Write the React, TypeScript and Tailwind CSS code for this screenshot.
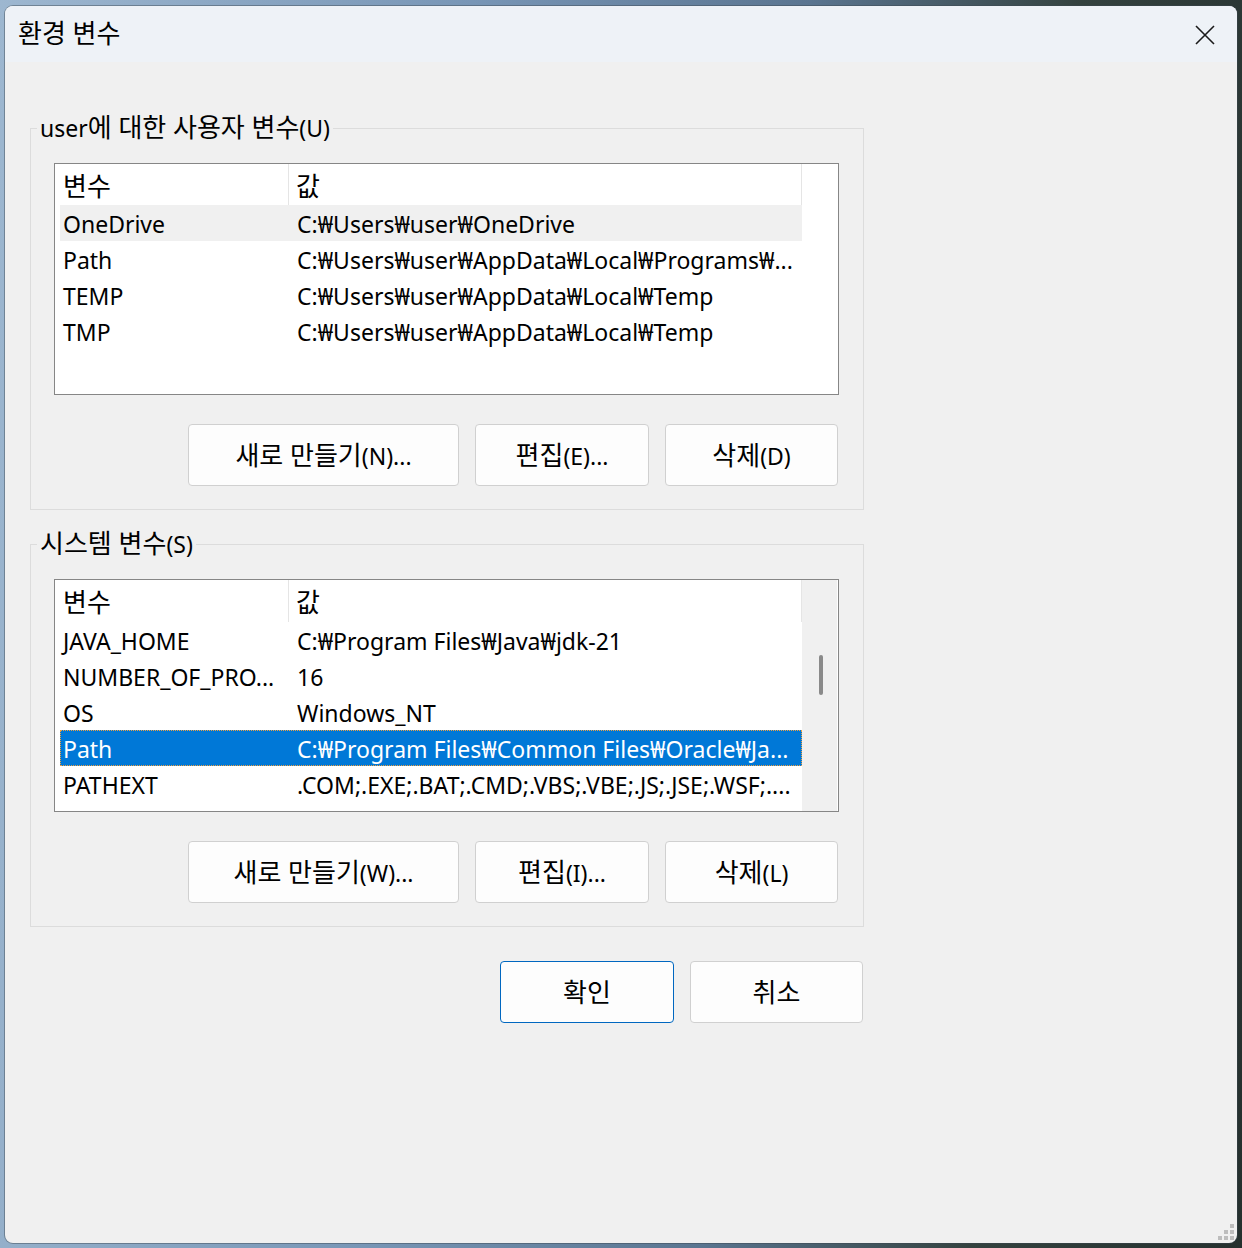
import React from "react";

const FONT = { fontFamily: '"Noto Sans", "Noto Sans CJK KR", sans-serif' };

function K({ t }: { t: string }) {
  const parts = t.split(/([\uAC00-\uD7A3]+(?: [\uAC00-\uD7A3]+)*)/);
  return (
    <>
      {parts.map((p, i) =>
        /[\uAC00-\uD7A3]/.test(p) ? (
          <span key={i} className="text-[26px] leading-none">
            {p}
          </span>
        ) : (
          <React.Fragment key={i}>{p}</React.Fragment>
        )
      )}
    </>
  );
}

function Btn({ label, w, primary }: { label: string; w: string; primary?: boolean }) {
  return (
    <div
      className={`${w} h-[62px] rounded-[4px] bg-[#fdfdfd] flex items-center justify-center text-[23px] leading-none text-black border ${
        primary ? "border-[#0067c0]" : "border-[#d0d0d0]"
      }`}
    >
      <span>
        <K t={label} />
      </span>
    </div>
  );
}

type Row = { name: string; value: string; selected?: boolean; hover?: boolean };

function ListView({
  rows,
  scroll,
  headerH,
  h,
}: {
  rows: Row[];
  scroll?: boolean;
  headerH: string;
  h: string;
}) {
  return (
    <div className={`w-[785px] ${h} border border-[#868686] bg-white flex overflow-hidden`}>
      <div className="w-[748px] flex flex-col">
        <div className={`${headerH} flex shrink-0`}>
          <div className="w-[234px] border-r border-[#e5e5e5] pl-[8px] pt-[2px] flex items-center">
            <K t="변수" />
          </div>
          <div className="w-[513px] border-r border-[#e5e5e5] pl-[7px] pt-[2px] flex items-center">
            <K t="값" />
          </div>
        </div>
        <div className="pl-[5px] flex flex-col">
          {rows.map((r) => (
            <div
              key={r.name}
              className={`h-[36px] w-[742px] flex items-center shrink-0 pt-[3px] text-[23px] whitespace-nowrap ${
                r.selected
                  ? "bg-[#0078d7] text-white outline-1 outline-dotted outline-[#f0a040] -outline-offset-1"
                  : r.hover
                  ? "bg-[#f0f0f0] text-black"
                  : "text-black"
              }`}
            >
              <div className="w-[229px] pl-[3px]">{r.name}</div>
              <div className="flex-1 pl-[8px]">{r.value}</div>
            </div>
          ))}
        </div>
      </div>
      {scroll ? (
        <div className="ml-[-1px] w-[35px] h-full bg-[#f0f0f0] flex justify-center">
          <div className="mt-[75px] ml-[2px] w-[4px] h-[40px] rounded-full bg-[#8a8a8a]" />
        </div>
      ) : null}
    </div>
  );
}

function Group({
  label,
  rows,
  scroll,
  buttons,
  headerH,
  listH,
  className,
}: {
  label: string;
  rows: Row[];
  scroll?: boolean;
  buttons: string[];
  headerH: string;
  listH: string;
  className: string;
}) {
  return (
    <div className={`relative w-[834px] border border-[#dcdcdc] pl-[23px] pr-[24px] pt-[34px] pb-[23px] ${className}`}>
      <span className="absolute left-[6px] top-[-16px] h-[30px] px-[3px] bg-[#f0f0f0] flex items-center text-[23px] text-black whitespace-nowrap">
        <span>
          <K t={label} />
        </span>
      </span>
      <ListView rows={rows} scroll={scroll} headerH={headerH} h={listH} />
      <div className="mt-[29px] flex justify-end gap-[16px] pr-[1px]">
        <Btn label={buttons[0]} w="w-[271px]" />
        <Btn label={buttons[1]} w="w-[174px]" />
        <Btn label={buttons[2]} w="w-[173px]" />
      </div>
    </div>
  );
}

export default function App() {
  return (
    <div
      className="w-[1242px] h-[1248px] overflow-hidden pl-[5px] pt-[6px] bg-[linear-gradient(95deg,#9db7d0_0%,#7896b6_35%,#5a7590_60%,#34423f_80%,#25302e_100%)]"
      style={FONT}
    >
      <div className="w-[1232px] h-[1237px] rounded-[8px] bg-[#f0f0f0] overflow-hidden flex flex-col shadow-[0_0_0_1px_rgba(60,70,80,0.45)] relative">
        <div className="h-[56px] shrink-0 bg-[#eef2f7] flex items-center justify-between pl-[13px] pr-[22px]">
          <span className="text-black">
            <K t="환경 변수" />
          </span>
          <svg width="20" height="20" viewBox="0 0 20 20" className="mt-[1px]">
            <path d="M1 1 L19 19 M19 1 L1 19" stroke="#1a1a1a" strokeWidth="1.6" />
          </svg>
        </div>
        <div className="pl-[25px] flex flex-col">
          <Group
            className="mt-[66px]"
            label="user에 대한 사용자 변수(U)"
            headerH="h-[41px]"
            listH="h-[232px]"
            rows={[
              { name: "OneDrive", value: "C:₩Users₩user₩OneDrive", hover: true },
              { name: "Path", value: "C:₩Users₩user₩AppData₩Local₩Programs₩..." },
              { name: "TEMP", value: "C:₩Users₩user₩AppData₩Local₩Temp" },
              { name: "TMP", value: "C:₩Users₩user₩AppData₩Local₩Temp" },
            ]}
            buttons={["새로 만들기(N)...", "편집(E)...", "삭제(D)"]}
          />
          <Group
            className="mt-[34px]"
            label="시스템 변수(S)"
            headerH="h-[42px]"
            listH="h-[233px]"
            scroll
            rows={[
              { name: "JAVA_HOME", value: "C:₩Program Files₩Java₩jdk-21" },
              { name: "NUMBER_OF_PRO...", value: "16" },
              { name: "OS", value: "Windows_NT" },
              { name: "Path", value: "C:₩Program Files₩Common Files₩Oracle₩Ja...", selected: true },
              { name: "PATHEXT", value: ".COM;.EXE;.BAT;.CMD;.VBS;.VBE;.JS;.JSE;.WSF;...." },
            ]}
            buttons={["새로 만들기(W)...", "편집(I)...", "삭제(L)"]}
          />
          <div className="mt-[34px] w-[834px] pr-[1px] flex justify-end gap-[16px]">
            <Btn label="확인" w="w-[174px]" primary />
            <Btn label="취소" w="w-[173px]" />
          </div>
        </div>
        <div className="absolute right-[3px] bottom-[3px] grid grid-cols-3 gap-[2px]">
          <div className="w-[4px] h-[4px]" />
          <div className="w-[4px] h-[4px]" />
          <div className="w-[4px] h-[4px] bg-[#bdbdbd]" />
          <div className="w-[4px] h-[4px]" />
          <div className="w-[4px] h-[4px] bg-[#bdbdbd]" />
          <div className="w-[4px] h-[4px] bg-[#bdbdbd]" />
          <div className="w-[4px] h-[4px] bg-[#bdbdbd]" />
          <div className="w-[4px] h-[4px] bg-[#bdbdbd]" />
          <div className="w-[4px] h-[4px] bg-[#bdbdbd]" />
        </div>
      </div>
    </div>
  );
}
